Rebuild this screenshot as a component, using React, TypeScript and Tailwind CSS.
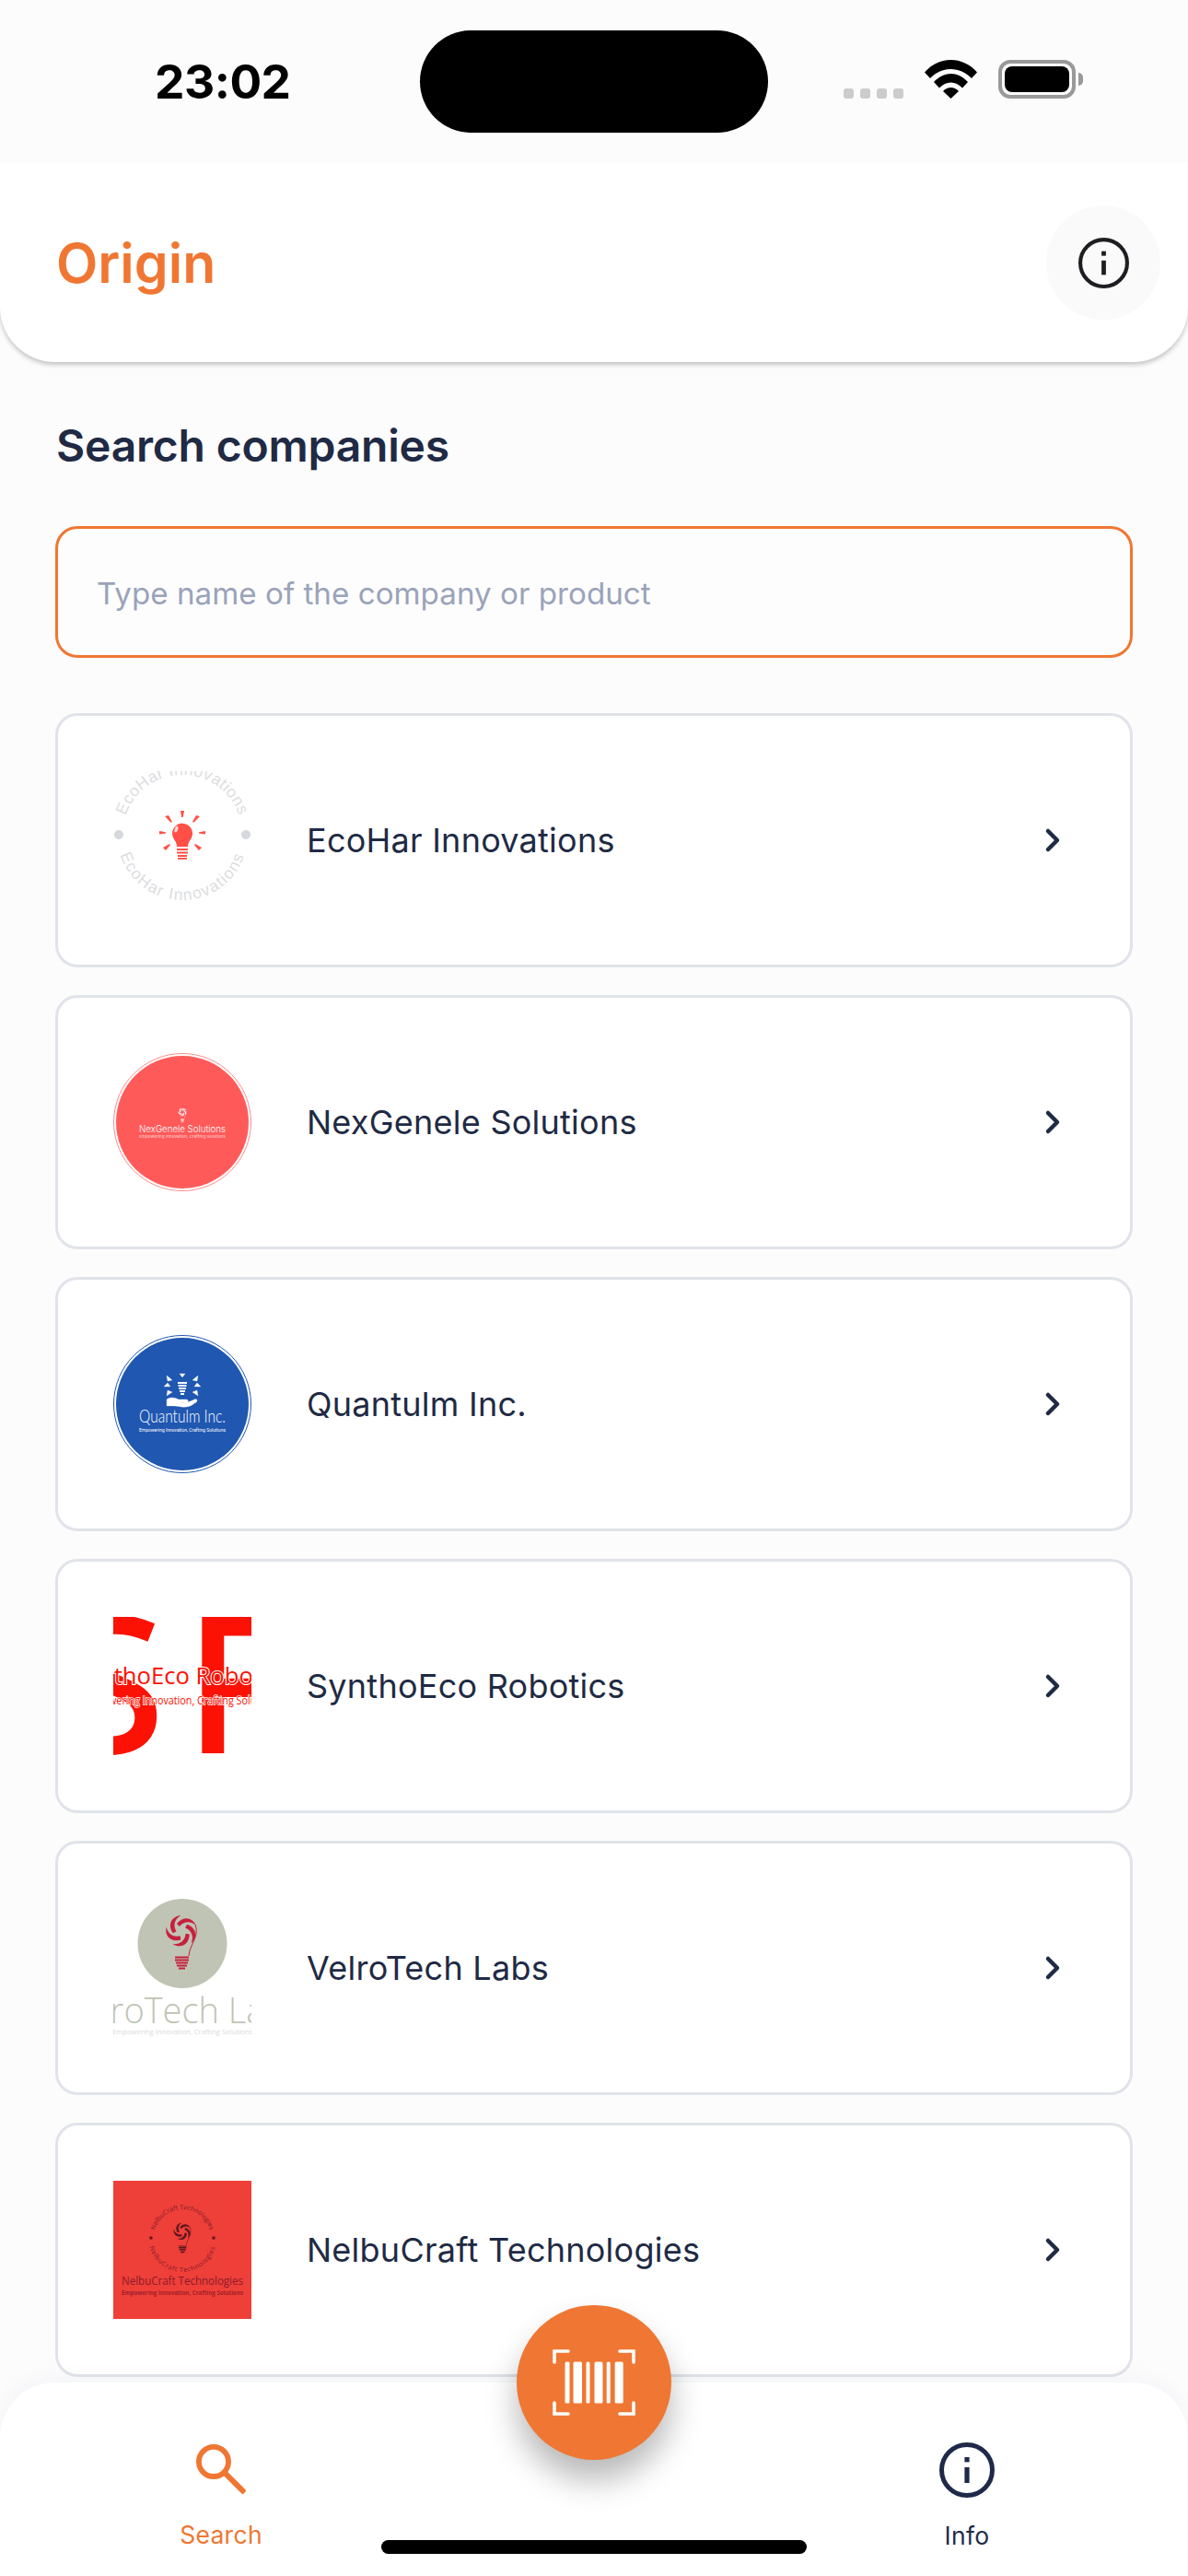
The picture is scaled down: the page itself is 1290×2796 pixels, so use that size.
import React from "react";
import { ChevronRight } from "lucide-react";

const companies = [
  { name: "EcoHar Innovations", logo: <EcoHarLogo /> },
  { name: "NexGenele Solutions", logo: <NexGeneleLogo /> },
  { name: "Quantulm Inc.", logo: <QuantulmLogo /> },
  { name: "SynthoEco Robotics", logo: <SynthoLogo /> },
  { name: "VelroTech Labs", logo: <VelroLogo /> },
  { name: "NelbuCraft Technologies", logo: <NelbuLogo /> },
];

const sans = "Liberation Sans, Arial, sans-serif";

function InfoIcon({ size, stroke, color }: { size: number; stroke: number; color: string }) {
  return (
    <svg width={size} height={size} viewBox="0 0 60 60" fill="none">
      <circle cx="30" cy="30" r={30 - stroke / 2} stroke={color} strokeWidth={stroke} />
      <rect x="27.4" y="27" width="5.2" height="17" fill={color} />
      <rect x="27.4" y="16" width="5.2" height="5.4" fill={color} />
    </svg>
  );
}

// swirl head centred on x,y, filament and screw base below it
function SpiralBulb({ color, x, y, s }: { color: string; x: number; y: number; s: number }) {
  return (
    <g transform={`translate(${x} ${y}) scale(${s})`}>
      <g fill={color}>
        {[0, 72, 144, 216, 288].map((deg) => (
          <path key={deg} transform={`rotate(${deg})`} d="M-5 -8C2 -17 12 -15 16 -6C10 -11 3 -11 -2 -5Z" />
        ))}
      </g>
      <path d="M15 -7C20 6 9 14 8 27" fill="none" stroke={color} strokeWidth="1" />
      <path d="M-7 28.500H8M-7 31.500H8M-6 34.500H7M-5 37.500H6M-3 40.500H4" fill="none" stroke={color} strokeWidth="2" />
    </g>
  );
}

function EcoHarLogo() {
  return (
    <svg width="150" height="150" viewBox="0 0 150 150">
      <defs>
        <path id="eco-top" d="M10 69a65 65 0 0 1 130 0" />
        <path id="eco-bottom" d="M4 69a71 71 0 0 0 142 0" />
      </defs>
      <g fontFamily={sans} fontSize="17.500" fill="#dcdde1">
        <text letterSpacing="0.5">
          <textPath href="#eco-top" startOffset="50%" textAnchor="middle">
            EcoHar Innovations
          </textPath>
        </text>
        <text letterSpacing="1.4">
          <textPath href="#eco-bottom" startOffset="50%" textAnchor="middle">
            EcoHar Innovations
          </textPath>
        </text>
      </g>
      <circle cx="6" cy="69" r="5" fill="#d5d8dc" />
      <circle cx="144" cy="69" r="5" fill="#d5d8dc" />
      <g fill="#ff4f46">
        <path d="M64 68a11 11 0 1 1 20 6c-2 3 -3 5 -3 8h-12c0 -3 -1 -5 -3 -8a11 11 0 0 1 -2 -6z" />
        <rect x="69" y="84" width="12" height="2" />
        <rect x="69" y="87.5" width="12" height="2" />
        <rect x="70" y="91" width="10" height="2" />
        <rect x="70" y="94" width="10" height="1.8" />
        <path d="M73 43l4 0-1.2 7h-1.6z" />
        <path d="M56 49l4 -1 4 7-1.5 .8z" />
        <path d="M94 49l-4 -1-4 7 1.5 .8z" />
        <path d="M50 65l0 3.6 7 -1.2v-1.2z" />
        <path d="M100 65l0 3.6-7 -1.2v-1.2z" />
        <path d="M57 86l-3 -3 7 -4 1 1z" />
        <path d="M93 86l3 -3-7 -4-1 1z" />
      </g>
      <ellipse cx="68.500" cy="63" rx="1.800" ry="3.500" fill="#ffd8d4" transform="rotate(18 68.5 63)" />
    </svg>
  );
}

function NexGeneleLogo() {
  return (
    <svg width="150" height="150" viewBox="0 0 150 150">
      <circle cx="75" cy="75" r="74.500" fill="none" stroke="#ff8a8a" strokeWidth="1" />
      <circle cx="75" cy="75" r="72" fill="#ff5a5a" />
      <SpiralBulb color="#ffffff" x={75} y={64} s={0.27} />
      <text x="75" y="86" textAnchor="middle" fontFamily="Inter, sans-serif" fontWeight="300" fontSize="10.500" fill="#fff" textLength="94" lengthAdjust="spacingAndGlyphs">
        NexGenele Solutions
      </text>
      <text x="75" y="91.500" textAnchor="middle" fontFamily="Inter, sans-serif" fontSize="4" fill="#ffdede" textLength="94" lengthAdjust="spacingAndGlyphs">
        Empowering Innovation, Crafting Solutions
      </text>
    </svg>
  );
}

function QuantulmLogo() {
  return (
    <svg width="150" height="150" viewBox="0 0 150 150">
      <circle cx="75" cy="75" r="74.500" fill="none" stroke="#1f57b1" strokeWidth="1" />
      <circle cx="75" cy="75" r="72" fill="#1f57b1" />
      <g fill="#fff" stroke="#fff">
        <path d="M70 52h10M70.500 55h9M71 58h8M72 61h6M73 64h4" strokeWidth="1.800" fill="none" />
        <path d="M64 49l-6 -5 1 6zM86 49l6 -5-1 6zM62 56l-7 0 4 -4zM88 56l7 0-4 -4zM64 62l-6 4 1 -6zM86 62l6 4-1 -6zM75 46l-3 -4h6z" strokeWidth=".3" />
        <path d="M58 70c4 -3 9 -2 13 0h8c3 0 3 3 0 3h-6c6 1 11 -1 15 -3 3 -1 4 1 2 3-5 4-10 6-16 5-5 -1-9 -1-16 -1z" strokeWidth=".3" />
      </g>
      <text x="75" y="95" textAnchor="middle" fontFamily="Lato, sans-serif" fontWeight="300" fontSize="19" fill="#fff" textLength="94" lengthAdjust="spacingAndGlyphs">
        Quantulm Inc.
      </text>
      <text x="75" y="105" textAnchor="middle" fontFamily="Roboto, sans-serif" fontSize="6" fill="#fff" textLength="94" lengthAdjust="spacingAndGlyphs">
        Empowering Innovation, Crafting Solutions
      </text>
    </svg>
  );
}

function SynthoLogo() {
  return (
    <svg width="150" height="150" viewBox="0 0 150 150">
      <defs>
        <clipPath id="syntho-clip">
          <rect width="150" height="150" />
        </clipPath>
      </defs>
      <g clipPath="url(#syntho-clip)" fontFamily="Open Sans, sans-serif" fill="#fb1204">
        <text x="-57" y="148" fontSize="206" fontWeight="600">S</text>
        <text x="77" y="148" fontSize="206" fontWeight="600">F</text>
        <text x="75" y="73" textAnchor="middle" fontSize="25" stroke="#fff" strokeWidth="2" paintOrder="stroke" textLength="234" lengthAdjust="spacingAndGlyphs">
          SynthoEco Robotics
        </text>
        <text x="73" y="95" textAnchor="middle" fontSize="13.500" stroke="#fff" strokeWidth="1.500" paintOrder="stroke" textLength="214" lengthAdjust="spacingAndGlyphs">
          Empowering Innovation, Crafting Solutions
        </text>
      </g>
    </svg>
  );
}

function VelroLogo() {
  return (
    <svg width="150" height="150" viewBox="0 0 150 150">
      <defs>
        <clipPath id="velro-clip">
          <rect width="150" height="150" />
        </clipPath>
      </defs>
      <circle cx="75" cy="48.500" r="48.500" fill="#bfc4b5" />
      <SpiralBulb color="#c8203c" x={74} y={35} s={1} />
      <g clipPath="url(#velro-clip)" textAnchor="middle" fontFamily="Open Sans, sans-serif">
        <text x="75" y="135" fontSize="38" fontWeight="300" fill="#bfc4b5">VelroTech Labs</text>
        <text x="75" y="147" fontSize="7.600" fill="#dadada" textLength="152" lengthAdjust="spacingAndGlyphs">Empowering Innovation, Crafting Solutions</text>
      </g>
    </svg>
  );
}

function NelbuLogo() {
  return (
    <svg width="150" height="150" viewBox="0 0 150 150">
      <defs>
        <path id="nelbu-top" d="M44 62a31 31 0 0 1 62 0" />
        <path id="nelbu-bottom" d="M38 62a37 37 0 0 0 74 0" />
      </defs>
      <rect width="150" height="150" fill="#ef3f39" />
      <g fontFamily="Open Sans, sans-serif" fontSize="7" fill="#7a1c28">
        <text>
          <textPath href="#nelbu-top" startOffset="50%" textAnchor="middle">
            NelbuCraft Technologies
          </textPath>
        </text>
        <text letterSpacing="0.7">
          <textPath href="#nelbu-bottom" startOffset="50%" textAnchor="middle">
            NelbuCraft Technologies
          </textPath>
        </text>
        <text x="75" y="113" textAnchor="middle" fontSize="12.500" fill="#8a1a2c" textLength="132" lengthAdjust="spacingAndGlyphs">
          NelbuCraft Technologies
        </text>
        <text x="75" y="124" textAnchor="middle" fontSize="6.800" fontWeight="700" textLength="132" lengthAdjust="spacingAndGlyphs" fill="#a01f2a">
          Empowering Innovation, Crafting Solutions
        </text>
      </g>
      <circle cx="41" cy="62" r="1.800" fill="#5e1720" />
      <circle cx="109" cy="62" r="1.800" fill="#5e1720" />
      <SpiralBulb color="#5e1720" x={75} y={55} s={0.56} />
    </svg>
  );
}

function StatusBar() {
  return (
    <div className="relative flex h-[177px] shrink-0 items-start bg-[#fcfcfc]">
      <div className="ml-[168px] mt-[59px] font-['Inter'] text-[51.5px] font-bold leading-[58px] tracking-[-0.5px] text-black">23:02</div>
      <div className="absolute left-[456px] top-[33px] h-[111px] w-[378px] rounded-full bg-black" />
      <div className="absolute left-[916px] top-[65px] flex h-[42px] items-end">
        <div className="mr-[23px] flex gap-[7px]">
          <span className="h-[11px] w-[11px] rounded-[3px] bg-[#cccccc]" />
          <span className="h-[11px] w-[11px] rounded-[3px] bg-[#cccccc]" />
          <span className="h-[11px] w-[11px] rounded-[3px] bg-[#cccccc]" />
          <span className="h-[11px] w-[11px] rounded-[3px] bg-[#cccccc]" />
        </div>
        <svg width="57" height="42" viewBox="0 0 57 42" className="mr-[23px]">
          <path d="M0 13.500C15.500 -4.500 41.500 -4.500 57 13.500L51 20C38.500 6.500 18.500 6.500 6 20Z" fill="#000" />
          <path d="M10 24C21 12 36 12 47 24L41 30.500C33.500 22.500 23.500 22.500 16 30.500Z" fill="#000" />
          <path d="M20 34C25 28.500 32 28.500 37 34L28.500 42Z" fill="#000" />
        </svg>
        <div className="flex items-center gap-[3px]">
          <div className="h-[42px] w-[84px] rounded-[13px] border-[4px] border-[#999999] p-[3px]">
            <div className="h-full w-full rounded-[8px] bg-black" />
          </div>
          <div className="h-[14px] w-[5px] rounded-r-full bg-[#999999]" />
        </div>
      </div>
    </div>
  );
}

function ScanIcon() {
  return (
    <svg width="90" height="72" viewBox="0 0 90 72" fill="none" stroke="#fff" strokeLinecap="round">
      <g strokeWidth="3.600">
        <path d="M2 14V2H17" />
        <path d="M88 14V2H73" />
        <path d="M2 58V70H17" />
        <path d="M88 58V70H73" />
      </g>
      <g stroke="none" fill="#fff">
        <rect x="13.500" y="13.500" width="5" height="45" rx="1.500" />
        <rect x="22.500" y="13.500" width="9.500" height="45" rx="1.500" />
        <rect x="36.500" y="13.500" width="4" height="45" rx="1.500" />
        <rect x="45.500" y="13.500" width="9" height="45" rx="1.500" />
        <rect x="58.700" y="13.500" width="4" height="45" rx="1.500" />
        <rect x="67.700" y="13.500" width="9" height="45" rx="1.500" />
      </g>
    </svg>
  );
}

function BottomNav() {
  return (
    <>
      <nav className="absolute bottom-0 left-0 flex h-[210px] w-full justify-between rounded-t-[60px] bg-white shadow-[0_-4px_24px_rgba(30,40,70,0.04)]">
        <div className="flex w-[480px] flex-col items-center pt-[67px]">
          <svg width="54" height="54" viewBox="3 3 18.500 18.500" fill="none" stroke="#ef7733" strokeWidth="2">
            <circle cx="9.500" cy="9.500" r="5.500" />
            <path d="M13.500 13.500L20.300 20.300" strokeLinecap="square" />
          </svg>
          <span className="mt-[27px] font-['Inter'] text-[26.5px] font-normal leading-[34px] tracking-[0.3px] text-[#ef7733]">Search</span>
        </div>
        <div className="flex w-[480px] flex-col items-center pt-[65px]">
          <InfoIcon size={60} stroke={5} color="#1f2a4a" />
          <span className="mt-[24px] font-['Inter'] text-[26.5px] font-normal leading-[34px] tracking-[0.3px] text-[#1f2a4a]">Info</span>
        </div>
      </nav>
      <button className="absolute left-[561px] top-[2502px] flex h-[168px] w-[168px] items-center justify-center rounded-full bg-[#ef7733] shadow-[0_22px_34px_rgba(0,0,0,0.28)]">
        <ScanIcon />
      </button>
      <div className="absolute left-[414px] top-[2757px] h-[15px] w-[462px] rounded-full bg-black" />
    </>
  );
}

export default function App() {
  return (
    <div className="relative flex h-[2796px] w-[1290px] flex-col overflow-hidden bg-[#fcfcfd] font-['Inter']">
      <StatusBar />
      <header className="flex h-[216px] shrink-0 items-center justify-between rounded-b-[60px] bg-white pl-[61px] pr-[30px] shadow-[0_3px_5px_rgba(0,0,0,0.22)]">
        <h1 className="text-[59px] font-semibold leading-none text-[#ef7733]">Origin</h1>
        <div className="flex h-[124px] w-[124px] items-center justify-center rounded-full bg-[#fafafa]">
          <InfoIcon size={55} stroke={4.500} color="#1e1e22" />
        </div>
      </header>
      <main className="flex flex-col px-[60px]">
        <h2 className="ml-[1px] mt-[62px] text-[48px] font-semibold leading-[58px] tracking-[-0.2px] text-[#1f2a44]">Search companies</h2>
        <div className="mt-[58px] flex h-[143px] items-center rounded-[24px] border-[3px] border-[#ef7733] bg-[#fdfdfd] pl-[42px] pt-[5px] text-[33.2px] leading-none text-[#9aa3ba]">
          Type name of the company or product
        </div>
        <ul className="mt-[60px] flex flex-col gap-[30px]">
          {companies.map((company) => (
            <li key={company.name} className="flex h-[276px] items-center rounded-[24px] border-[3px] border-[#e1e3ea] bg-white pl-[60px] pr-[64px]">
              <div className="h-[150px] w-[150px] shrink-0">{company.logo}</div>
              <span className="ml-[60px] flex-1 text-[36px] font-normal leading-none tracking-[0.25px] text-[#1f2a44]">{company.name}</span>
              <ChevronRight size={40} strokeWidth={2.700} className="shrink-0 text-[#1f2a44]" />
            </li>
          ))}
        </ul>
      </main>
      <BottomNav />
    </div>
  );
}
